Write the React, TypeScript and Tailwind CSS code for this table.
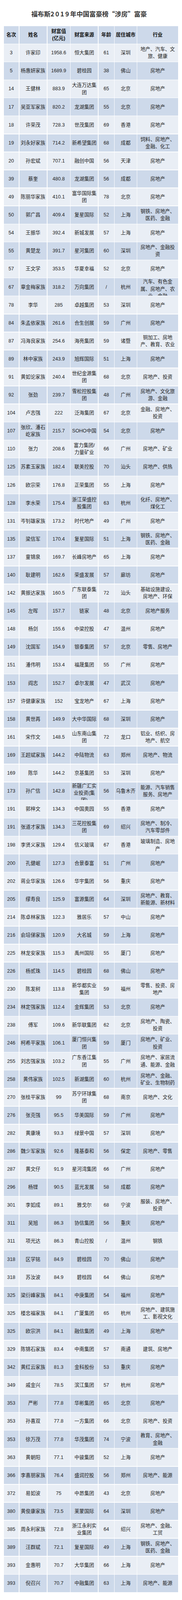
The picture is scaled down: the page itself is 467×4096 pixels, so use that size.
import clsx from 'clsx'

// 名次, 姓名, 财富值, 财富来源, 年龄, 居住城市, 行业 ("\n" = forced line break as in the source)
const rows: string[][] = [
  ['3', '许家印', '1958.6', '恒大集团', '61', '深圳', '地产、汽车、文\n旅、健康'],
  ['5', '杨惠妍家族', '1689.9', '碧桂园', '38', '佛山', '房地产'],
  ['14', '王健林', '883.9', '大连万达集\n团', '65', '北京', '房地产'],
  ['17', '吴亚军家族', '820.2', '龙湖集团', '55', '北京', '房地产'],
  ['18', '许荣茂', '728.3', '世茂集团', '69', '香港', '房地产'],
  ['19', '刘永好家族', '714.2', '新希望集团', '68', '成都', '饲料、房地产、\n金融、化工'],
  ['20', '孙宏斌', '707.1', '融创中国', '56', '天津', '房地产'],
  ['39', '蔡奎', '480.8', '龙湖集团', '56', '成都', '房地产'],
  ['49', '陈丽华家族', '410.1', '富华国际集\n团', '78', '北京', '房地产'],
  ['50', '郭广昌', '409.4', '复星国际', '52', '上海', '钢铁、房地产、\n医药、金融'],
  ['54', '王振华', '392.4', '新城发展', '57', '上海', '房地产'],
  ['55', '黄楚龙', '391.7', '星河集团', '60', '深圳', '房地产、金融投\n资'],
  ['57', '王文学', '353.5', '华夏幸福', '52', '北京', '房地产'],
  ['67', '章金梅家族', '318.2', '万向集团', '/', '杭州', '汽车、有色金\n属、房地产、农\n业、金融'],
  ['78', '李华', '285', '卓越集团', '53', '深圳', '房地产'],
  ['84', '朱孟依家族', '261.6', '合生创展', '59', '广州', '房地产'],
  ['87', '冯海良家族', '254.6', '海亮集团', '59', '诸暨', '铜加工、房地\n产、教育、农业'],
  ['89', '林中家族', '243.9', '旭辉国际', '51', '上海', '房地产'],
  ['91', '黄如论家族', '240.4', '世纪金源集\n团', '68', '北京', '房地产、投资'],
  ['92', '张劲', '239.7', '雪松控股集\n团', '48', '广州', '房地产、文化旅\n游、金融'],
  ['104', '卢志强', '222', '泛海集团', '67', '北京', '金融、房地产、\n投资'],
  ['107', '张欣、潘石\n屹家族', '215.7', 'SOHO中国', '54', '北京', '房地产'],
  ['110', '张力', '208.6', '富力集团/\n力量矿业', '66', '广州', '房地产、矿业'],
  ['125', '苏素玉家族', '182.4', '联美控股', '70', '汕头', '房地产、供热'],
  ['126', '欧宗荣', '176.8', '正荣集团', '55', '上海', '房地产'],
  ['128', '李水荣', '175.4', '浙江荣盛控\n股集团', '63', '杭州', '化纤、房地产、\n煤化工'],
  ['131', '岑钊雄家族', '173.2', '时代地产', '49', '广州', '房地产'],
  ['135', '梁信军', '170.4', '复星国际', '51', '上海', '钢铁、房地产、\n医药、金融'],
  ['137', '童锦泉', '169.7', '长峰房地产', '65', '上海', '房地产'],
  ['140', '耿建明', '162.6', '荣盛发展', '57', '廊坊', '房地产'],
  ['142', '黄振达家族', '160.5', '广东联泰集\n团', '72', '汕头', '基础设施建设、\n房地产、环保'],
  ['145', '左晖', '157.7', '链家', '48', '北京', '房地产服务'],
  ['148', '杨剑', '155.6', '中梁控股', '47', '温州', '房地产'],
  ['149', '沈国军', '154.9', '银泰集团', '57', '北京', '零售、房地产'],
  ['151', '潘伟明', '153.4', '福晟集团', '55', '广州', '房地产'],
  ['153', '阎志', '152.7', '卓尔发展', '47', '武汉', '房地产'],
  ['157', '许健康家族', '152', '宝龙地产', '67', '上海', '房地产'],
  ['158', '黄世再', '149.9', '大中华国际', '68', '深圳', '房地产'],
  ['161', '宋作文', '148.5', '山东南山集\n团', '72', '龙口', '铝业、纺织、房\n地产、航空'],
  ['169', '王超斌家族', '144.2', '中陆物流', '63', '郑州', '房地产、物流'],
  ['169', '陈华', '144.2', '京基集团', '53', '深圳', '房地产'],
  ['173', '孙广信', '142.8', '新疆广汇实\n业投资(集\n团)', '56', '乌鲁木齐', '能源、汽车销售\n服务、房地产'],
  ['191', '郭梓文', '134.3', '中国奥园', '55', '香港', '房地产'],
  ['191', '张道才家族', '134.3', '三花控股集\n团', '69', '绍兴', '房地产、制冷、\n汽车零部件'],
  ['198', '李贤义家族', '129.4', '信义玻璃', '67', '香港', '玻璃制造、房地\n产'],
  ['200', '孔健岷', '127.3', '合景泰富', '51', '广州', '房地产'],
  ['202', '蒋业华家族', '126.6', '华宇集团', '56', '重庆', '房地产'],
  ['205', '缪寿良', '125.9', '富源集团', '64', '深圳', '房地产、教育、\n新能源、新材料'],
  ['214', '陈卓林家族', '122.3', '雅居乐', '57', '中山', '房地产'],
  ['216', '俞培俤家族', '120.9', '大名城', '59', '上海', '房地产'],
  ['225', '林龙安家族', '115.3', '禹州国际', '55', '厦门', '房地产'],
  ['226', '杨贰珠', '114.5', '碧桂园', '68', '佛山', '房地产'],
  ['230', '陈发树', '113.8', '新华都实业\n集团', '59', '福州', '零售、投资、房\n地产'],
  ['234', '林定强家族', '112.4', '金辉集团', '53', '北京', '房地产'],
  ['238', '傅军', '109.6', '新华联集团', '62', '北京', '房地产、陶瓷、\n投资'],
  ['246', '柯希平家族', '106.1', '厦门恒兴集\n团', '59', '厦门', '房地产、矿业、\n投资'],
  ['255', '刘志强家族', '103.2', '广东香江集\n团', '55', '广州', '房地产、家居流\n通、能源、金融'],
  ['258', '黄伟家族', '102.5', '新湖集团', '60', '杭州', '房地产、金融、\n矿业、生物制药'],
  ['270', '张桂平家族', '99', '苏宁环球集\n团', '68', '南京', '房地产、文化'],
  ['276', '张克强', '95.5', '华美国际', '59', '广州', '房地产'],
  ['282', '黄康境', '93.3', '绿景中国', '57', '深圳', '房地产'],
  ['286', '魏少军家族', '92.6', '隆基泰和', '56', '保定', '房地产、零售'],
  ['287', '黄文仔', '91.9', '星河湾集团', '66', '广州', '房地产'],
  ['296', '杨铿', '90.5', '蓝光发展', '58', '成都', '房地产'],
  ['301', '李如成', '89.1', '雅戈尔', '68', '宁波', '服装、房地产、\n投资'],
  ['311', '吴旭', '86.3', '协信集团', '56', '重庆', '房地产'],
  ['311', '项光达', '86.3', '青山控股', '/', '温州', '钢铁'],
  ['318', '区学铭', '84.9', '碧桂园', '70', '佛山', '房地产'],
  ['318', '苏汝波', '84.9', '碧桂园', '64', '佛山', '房地产'],
  ['325', '梁衍峰家族', '84.1', '中庚集团', '54', '福州', '房地产'],
  ['325', '楼忠福家族', '84.1', '广厦集团', '65', '杭州', '房地产、建筑施\n工、影视文化'],
  ['325', '欧宗洪', '84.1', '融信集团', '49', '上海', '房地产'],
  ['329', '陈锦石家族', '83.4', '中南集团', '57', '南通', '建筑、房地产'],
  ['342', '黄红云家族', '81.3', '金科股份', '53', '重庆', '房地产'],
  ['349', '戚金兴', '78.5', '滨江集团', '57', '杭州', '房地产'],
  ['353', '严彬', '77.8', '华彬集团', '65', '北京', '房地产'],
  ['353', '孙喜双', '77.8', '一方集团', '66', '北京', '房地产、投资'],
  ['353', '徐万茂', '77.8', '华茂集团', '74', '宁波', '教育、房地产、\n金融'],
  ['363', '黄朝阳', '77.1', '中骏集团', '52', '上海', '房地产'],
  ['366', '李喜朋家族', '76.4', '盛润控股', '56', '郑州', '房地产、能源'],
  ['372', '易如波', '75', '中昂集团', '43', '北京', '房地产'],
  ['380', '黄俊康家族', '73.5', '莱蒙国际', '64', '深圳', '房地产'],
  ['385', '周永利家族', '72.8', '浙江永利实\n业集团', '64', '绍兴', '房地产、金融、\n工贸'],
  ['389', '汪群斌', '72.1', '复星国际', '49', '上海', '钢铁、房地产、\n医药、金融'],
  ['393', '金惠明', '70.7', '大华集团', '66', '上海', '房地产'],
  ['393', '倪召兴', '70.7', '中融集团', '63', '上海', '房地产、能源'],
]

const header = ['名次', '姓名', '财富值\n(亿元)', '财富来源', '年龄', '居住城市', '行业']

function Cell({ text, bg, bold }: { text: string; bg: string; bold?: boolean }) {
  // cells with more than two lines overflow: the source shows them top-aligned and clipped
  const tall = text.split('\n').length > 2
  return (
    <div
      className={clsx(
        'flex flex-col items-center overflow-hidden whitespace-pre text-center',
        tall ? 'justify-start' : 'justify-center',
        bg,
        bold && 'font-bold text-[#111]'
      )}
    >
      {text}
    </div>
  )
}

function Row({ cells, bg, bold }: { cells: string[]; bg: string; bold?: boolean }) {
  return (
    <div className="grid h-[44.6px] grid-cols-[38.5px_70.5px_58.2px_70px_39.9px_56.7px_104.65px] gap-x-[1.5px]">
      {cells.map((c, i) => (
        <Cell key={i} text={c} bg={bg} bold={bold} />
      ))}
    </div>
  )
}

export default function App() {
  return (
    <div className="h-[4096px] w-[467px] bg-white font-['Liberation_Sans','Noto_Sans_CJK_SC',sans-serif] text-[12.6px] leading-[18.2px] text-[#222]">
      <div className="flex h-[67px] items-center justify-center pt-[3px] pr-[10px]">
        <h1 className="font-['Noto_Sans_CJK_SC',sans-serif] text-[16.4px] font-bold leading-none text-[#333]">
          福布斯<span className="tracking-[3px]">2019</span>年中国富豪榜“涉房”富豪
        </h1>
      </div>

      <div className="ml-[9.5px] flex w-[447.5px] flex-col gap-y-[1.5px]">
        <Row cells={header} bg="bg-[#cdd9ea]" bold />
        {rows.map((r, i) => (
          <Row key={i} cells={r} bg={i % 2 === 0 ? 'bg-[#e9eef5]' : 'bg-[#cdd9ea]'} />
        ))}
      </div>
    </div>
  )
}
